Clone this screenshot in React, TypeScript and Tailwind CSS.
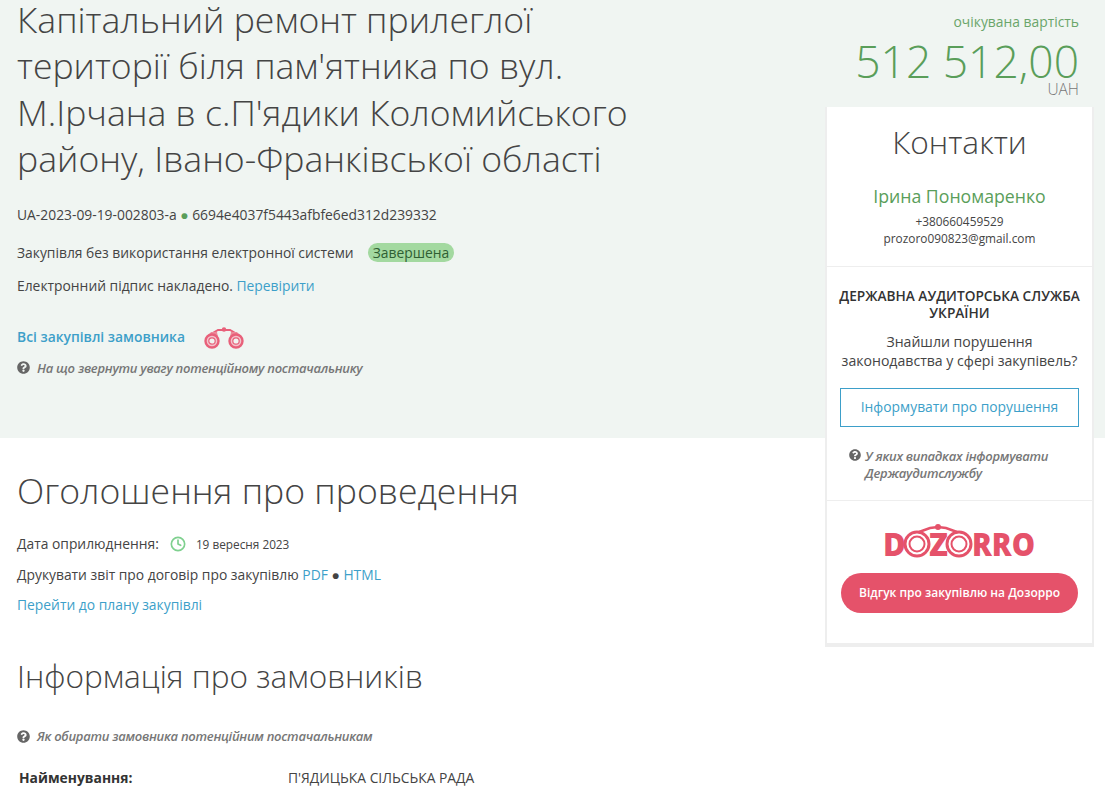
import { Clock } from "lucide-react";
import { FaQuestionCircle } from "react-icons/fa";

function Binoculars() {
  return (
    <svg width="42" height="22" viewBox="0 0 42 22" fill="none">
      <path d="M8 7 L15 3 L21 3 L27 3 L34 7" stroke="#e8607a" strokeWidth="2" />
      <circle cx="21" cy="2.5" r="2.2" fill="#e8607a" />
      <path d="M3 11 L8 5 L14 5 L15 10 Z" fill="#ec8a9a" />
      <path d="M39 11 L34 5 L28 5 L27 10 Z" fill="#ec8a9a" />
      <circle cx="9" cy="14" r="6.5" stroke="#e8607a" strokeWidth="2.4" fill="#f3c3cc" />
      <circle cx="9" cy="14" r="3.2" stroke="#e8607a" strokeWidth="1.2" fill="#f0f5f2" />
      <circle cx="33" cy="14" r="6.5" stroke="#e8607a" strokeWidth="2.4" fill="#f3c3cc" />
      <circle cx="33" cy="14" r="3.2" stroke="#e8607a" strokeWidth="1.2" fill="#f0f5f2" />
    </svg>
  );
}

function DozorroLogo() {
  const font = { fontFamily: '"Open Sans", sans-serif', fontWeight: 800, fontSize: 31 };
  return (
    <svg width="152" height="34" viewBox="0 0 152 34" fill="none" className="overflow-visible">
      <text x="-1" y="32" fill="#e5526a" style={font}>D</text>
      <circle cx="33" cy="20" r="12" stroke="#e5526a" strokeWidth="3" />
      <circle cx="33" cy="20" r="7.5" stroke="#e5526a" strokeWidth="2" />
      <text x="45" y="32" fill="#e5526a" style={font}>Z</text>
      <circle cx="75" cy="20" r="12" stroke="#e5526a" strokeWidth="3" />
      <circle cx="75" cy="20" r="7.5" stroke="#e5526a" strokeWidth="2" />
      <path d="M35 8 L46 4 L54 3 L62 4 L73 8" stroke="#e5526a" strokeWidth="2.5" />
      <circle cx="54" cy="3" r="3" fill="#e5526a" />
      <text x="88" y="32" fill="#e5526a" textLength="63" lengthAdjust="spacingAndGlyphs" style={font}>RRO</text>
    </svg>
  );
}

function Hint({ text }: { text: string }) {
  return (
    <div className="flex items-center gap-[7px] text-[13px] leading-[18px] font-semibold italic text-[#777]">
      <FaQuestionCircle size={13} className="shrink-0 text-[#666]" />
      <span className="tracking-[-0.27px]">{text}</span>
    </div>
  );
}

export default function App() {
  return (
    <main className="h-[800px] overflow-hidden bg-white text-[13.85px] text-[#444]" style={{ fontFamily: '"Open Sans", sans-serif' }}>
      {/* Hero */}
      <section className="h-[438px] bg-[#f0f5f2]">
        <div className="flex justify-between pl-[17px] pr-[11px]">
          <div className="w-[640px]">
            <h1 className="mt-[-4px] text-[35.6px] leading-[46.4px] font-light text-[#444]">
              Капітальний ремонт прилеглої території біля пам'ятника по вул. М.Ірчана в с.П'ядики Коломийського району, Івано-Франківської області
            </h1>
            <p className="mt-[23px] leading-[20px]">
              UA-2023-09-19-002803-a <span className="text-[#5a9e5a]">●</span> 6694e4037f5443afbfe6ed312d239332
            </p>
            <div className="mt-[18px] flex items-center leading-[20px]">
              <span>Закупівля без використання електронної системи</span>
              <span className="ml-[14px] rounded-full bg-[#a3d9a0] px-[5px] leading-[19px] text-[#2f5f33]">Завершена</span>
            </div>
            <p className="mt-[13px] leading-[20px]">
              Електронний підпис накладено. <a className="text-[#3d9fc9]">Перевірити</a>
            </p>
            <div className="mt-[31px] flex items-center gap-[18px]">
              <a className="font-semibold text-[#3d9fc9]">Всі закупівлі замовника</a>
              <Binoculars />
            </div>
            <div className="mt-[10px]">
              <Hint text="На що звернути увагу потенційному постачальнику" />
            </div>
          </div>

          {/* Right column */}
          <aside className="w-[269px]">
            <div className="pr-[15px] text-right">
              <p className="pt-[12px] leading-[19px] text-[#6aa56a]">очікувана вартість</p>
              <p className="mt-[4px] text-[44.4px] leading-[52px] font-light text-[#5a9e5a]">512 512,00</p>
              <p className="mt-[-7px] text-[15.5px] leading-[19px] font-light text-[#777]">UAH</p>
            </div>
            <div className="mt-[8px] border-x-2 border-b-4 border-[#eeeeee] bg-white text-center">
              <div className="border-b border-[#eeeeee] pt-[14px] pb-[19px]">
                <h2 className="text-[31.7px] leading-[41px] font-light text-[#444]">Контакти</h2>
                <p className="mt-[22px] text-[17.7px] leading-[25px] text-[#5a9e5a]">Ірина Пономаренко</p>
                <p className="mt-[4px] text-[11.85px] leading-[17px]">+380660459529</p>
                <p className="text-[11.85px] leading-[17px]">prozoro090823@gmail.com</p>
              </div>
              <div className="border-b border-[#eeeeee] px-[13px] pt-[20px] pb-[18px]">
                <p className="mx-[-6px] text-[13.7px] leading-[17px] font-semibold text-[#333]">ДЕРЖАВНА АУДИТОРСЬКА СЛУЖБА УКРАЇНИ</p>
                <p className="mx-[-2px] mt-[11px] text-[14.1px] leading-[19px]">Знайшли порушення законодавства у сфері закупівель?</p>
                <button className="mt-[18px] h-[39px] w-full border border-[#3d9fc9] text-[#3d9fc9]">Інформувати про порушення</button>
                <div className="mt-[21px] flex gap-[4px] pl-[9px] text-left text-[13px] leading-[17px] font-semibold italic text-[#777]">
                  <FaQuestionCircle size={12} className="mt-[1px] shrink-0 text-[#666]" />
                  <span className="tracking-[-0.27px]">У яких випадках інформувати Держаудитслужбу</span>
                </div>
              </div>
              <div className="flex flex-col items-center px-[14px] pt-[23px] pb-[30px]">
                <DozorroLogo />
                <button className="mt-[15px] h-[40px] w-full rounded-full bg-[#e5526a] text-[12px] font-semibold text-white">Відгук про закупівлю на Дозорро</button>
              </div>
            </div>
          </aside>
        </div>
      </section>

      {/* Announcement */}
      <section className="pl-[17px]">
        <h2 className="mt-[28px] text-[35.6px] leading-[49px] font-light text-[#444]">Оголошення про проведення</h2>
        <div className="mt-[19px] flex items-center leading-[20px]">
          <span>Дата оприлюднення:</span>
          <Clock size={16} strokeWidth={2.5} className="ml-[11px] text-[#7fd08f]" />
          <span className="ml-[10px] text-[11.8px]">19 вересня 2023</span>
        </div>
        <p className="mt-[11px] leading-[20px]">
          Друкувати звіт про договір про закупівлю <a className="text-[#3d9fc9]">PDF</a> ● <a className="text-[#3d9fc9]">HTML</a>
        </p>
        <p className="mt-[10px] leading-[20px]"><a className="text-[#3d9fc9]">Перейти до плану закупівлі</a></p>

        <h2 className="mt-[40px] text-[31.6px] leading-[41px] font-light text-[#444]">Інформація про замовників</h2>
        <div className="mt-[31px]">
          <Hint text="Як обирати замовника потенційним постачальникам" />
        </div>
        <div className="mt-[23px] flex leading-[20px]">
          <span className="w-[271px] pl-[2px] font-bold text-[#333]">Найменування:</span>
          <span>П'ЯДИЦЬКА СІЛЬСЬКА РАДА</span>
        </div>
      </section>
    </main>
  );
}
